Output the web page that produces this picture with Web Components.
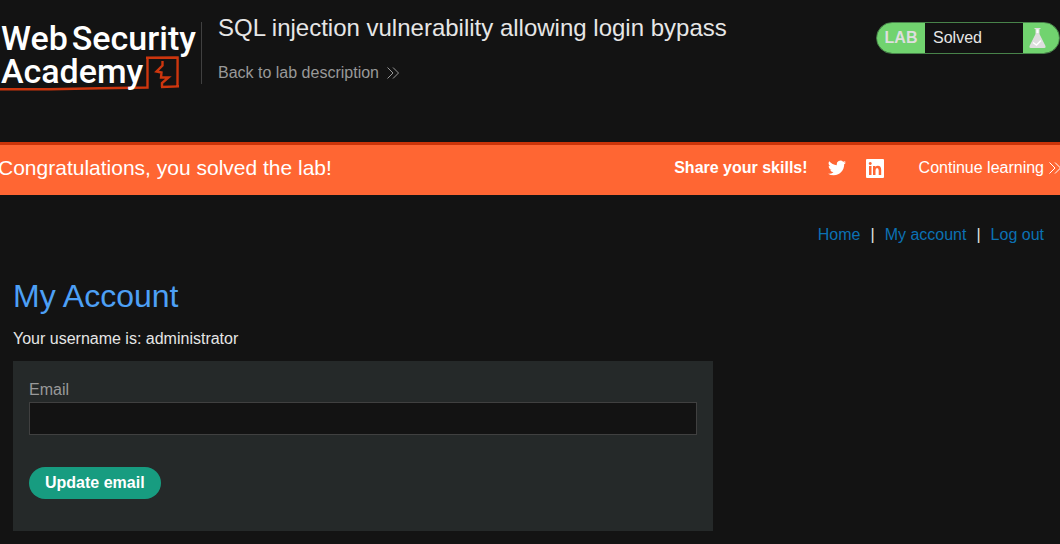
<!DOCTYPE html>
<html lang="en">
<head>
<meta charset="utf-8">
<meta name="viewport" content="width=device-width, initial-scale=1">
<title>SQL injection vulnerability allowing login bypass</title>
<style>
body { margin: 0; background: #131313; color: #e6e6e6; font: 16px/20px "Liberation Sans", Arial, sans-serif; overflow-x: hidden; }
</style>
</head>
<body>
<lab-header></lab-header>
<lab-banner>Congratulations, you solved the lab!</lab-banner>
<account-page></account-page>
<script>
function define(name, html) {
  const template = document.createElement('template');
  template.innerHTML = html;
  customElements.define(name, class extends HTMLElement {
    constructor() {
      super();
      this.attachShadow({ mode: 'open' }).append(template.content.cloneNode(true));
    }
  });
}

define('double-chevron', `
<style>
:host { display: inline-flex; }
svg { display: block; fill: none; stroke: currentColor; }
</style>
<svg width="12" height="12" viewBox="0 0 12 12" aria-hidden="true"><path d="M0.5 0.5 6 6 0.5 11.5M6 0.5 11.5 6 6 11.5"/></svg>`);

define('academy-logo', `
<style>
:host { display: block; position: relative; width: 196px; height: 72px; color: #fff; font: 500 34px/33px Roboto, sans-serif; }
a { display: block; color: inherit; text-decoration: none; position: relative; padding-top: 2px; }
.line { display: flex; gap: 4px; padding-left: 1px; }
svg { position: absolute; left: 0; top: 0; fill: none; stroke: #cd360e; }
</style>
<svg width="196" height="72" viewBox="0 0 196 72" aria-hidden="true">
  <path d="M0 69.3 50 69.2 100 68.200 147.500 67.500V37.200M146 37.800 178.500 37.500M177.600 36.500 177.500 66.500M179 66.400 161 67" stroke-width="2.400"/>
  <path d="M162.500 41 162.500 45.500 156.500 51.500 161.500 52.500 161 57.500 168.500 57.500 162 63V67" stroke-width="2.400"/>
</svg>
<a href="#"><span class="line"><span>Web</span><span>Security</span></span><span class="line">Academy</span></a>`);

define('lab-status', `
<style>
:host { display: flex; box-sizing: border-box; height: 32px; width: 184px; border: 1px solid #48834a; border-radius: 16px; overflow: hidden; line-height: 30px; }
b { width: 48px; text-align: center; background: #71d36f; color: #dedede; }
p { flex: 1; margin: 0; padding-left: 8px; color: #e6e6e6; }
span { width: 36px; background: #71d36f; display: flex; align-items: center; padding-left: 6px; box-sizing: border-box; }
</style>
<b>LAB</b><p><slot></slot></p>
<span><svg width="18" height="20" viewBox="0 0 18 20" aria-hidden="true"><path d="M5.500 0h6v1h-1V6l6 12q.500 2-1 2h-14q-1.500 0-1-2l6-12V1h-1z" fill="#dedede"/><path d="m4 14.500 3.500 2.500 4.500-4.500" fill="none" stroke="#fff" stroke-width="1.500"/><path d="M7.500 1.500h2V5h-2z" fill="#fff"/></svg></span>`);

define('lab-header', `
<style>
:host { display: block; }
header { display: flex; align-items: flex-start; padding: 20px 0; min-height: 102px; }
.title { flex: 1; margin: 2px 0 0 5px; border-left: 1px solid #404040; padding-left: 16px; height: 62px; }
h2 { margin: -8px 0 21px; font-size: 24px; line-height: 28px; font-weight: 400; }
a { display: inline-flex; align-items: center; gap: 8px; color: #999; text-decoration: none; }
lab-status { margin-top: 2px; }
</style>
<header>
  <academy-logo></academy-logo>
  <div class="title">
    <h2>SQL injection vulnerability allowing login bypass</h2>
    <a href="#">Back to lab description<double-chevron></double-chevron></a>
  </div>
  <lab-status>Solved</lab-status>
</header>`);

define('lab-banner', `
<style>
:host { display: block; }
section { display: flex; align-items: center; box-sizing: border-box; height: 53px; padding-bottom: 4px; border-top: 3px solid #cb3409; background: #f63; color: #fff; }
h4 { flex: 1; margin: 0 0 0 -2px; font-size: 21px; line-height: 24px; font-weight: 400; }
a { display: flex; align-items: center; color: inherit; text-decoration: none; }
.icon { margin-left: 20px; }
.next { margin-left: 35px; gap: 5px; }
double-chevron { margin-right: -1px; }
svg { display: block; fill: #fff; }
</style>
<section>
  <h4><slot></slot></h4>
  <b>Share your skills!</b>
  <a class="icon" href="#" aria-label="Twitter"><svg width="18" height="18" viewBox="0 0 24 24"><path d="M23.950 4.570a10 10 0 0 1-2.820.770 4.960 4.960 0 0 0 2.160-2.720c-.950.550-2 .950-3.130 1.180a4.920 4.920 0 0 0-8.380 4.480A13.930 13.930 0 0 1 1.640 3.160a4.920 4.920 0 0 0 1.520 6.570 4.900 4.900 0 0 1-2.230-.610v.060a4.920 4.920 0 0 0 3.950 4.830 5 5 0 0 1-2.220.080 4.940 4.940 0 0 0 4.600 3.420A9.870 9.870 0 0 1 0 19.540a13.990 13.990 0 0 0 7.550 2.210c9.050 0 14-7.500 14-13.980l-.020-.640a9.940 9.940 0 0 0 2.420-2.560z"/></svg></a>
  <a class="icon" href="#" aria-label="LinkedIn"><svg width="18" height="19" viewBox="0 0 18 19"><path fill-rule="evenodd" d="M1 0h16q1 0 1 1v17q0 1-1 1H1q-1 0-1-1V1Q0 0 1 0zM3 7v9h2.500V7zM4.200 3a1.500 1.500 0 1 0 .1 0zM7 7v9h2.500v-4.500q0-2.500 1.600-2.500t1.600 2.500V16h2.500v-5q0-4.300-3.300-4.300-1.700 0-2.500 1.300V7z"/></svg></a>
  <a class="next" href="#">Continue learning<double-chevron></double-chevron></a>
</section>`);

define('account-nav', `
<style>
:host { display: block; }
nav { display: flex; justify-content: flex-end; gap: 10px; color: #e6e6e6; }
a { color: #0b71b3; text-decoration: none; }
</style>
<nav><a href="#">Home</a><span>|</span><a href="#">My account</a><span>|</span><a href="#">Log out</a></nav>`);

define('email-form', `
<style>
:host { display: block; max-width: 700px; background: #252929; }
form { padding: 19px 16px 32px; }
label { display: block; margin-bottom: 2px; color: #999; }
input { display: block; box-sizing: border-box; width: 100%; height: 33px; padding: 0 8px; border: 1px solid #404040; border-radius: 0; background: #131313; color: #e6e6e6; font: inherit; }
button { display: block; margin-top: 32px; height: 32px; padding: 0 16px; border: 0; border-radius: 16px; background: #179c80; color: #fff; font: inherit; font-weight: 700; }
</style>
<form>
  <label for="email">Email</label>
  <input id="email" type="email" name="email">
  <button type="button">Update email</button>
</form>`);

define('account-page', `
<style>
:host { display: block; }
main { padding: 30px 13px 13px; }
account-nav { margin-right: 3px; }
h1 { margin: 33px 0 15px; font-size: 32px; line-height: 36px; font-weight: 400; color: #4da0f6; }
p { margin: 0 0 12px; }
</style>
<main>
  <account-nav></account-nav>
  <h1>My Account</h1>
  <p>Your username is: administrator</p>
  <email-form></email-form>
</main>`);
</script>
</body>
</html>
